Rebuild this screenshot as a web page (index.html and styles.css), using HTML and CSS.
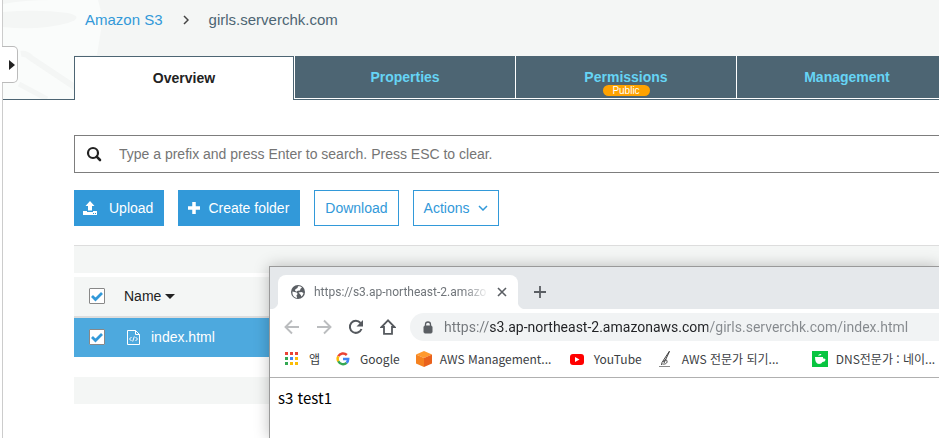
FILE: index.html
```
<!DOCTYPE html>
<html lang="ko">
<head>
<meta charset="UTF-8">
<title>Amazon S3</title>
<link rel="stylesheet" href="styles.css">
</head>
<body>

<div class="console">
	<header class="top">
		<!-- bucket -->
		<svg class="bucket" width="102" height="99" viewBox="0 0 102 99" aria-hidden="true">
			<path fill="#fafcfb" d="M0 4Q20 0 50 0H95Q101 20 98 30L94 55H71V99H0z"/>
			<path fill="#f4f6f5" d="M0 12Q35 9 65 13 82 17 65 23 35 31 0 27z"/>
			<path d="M16 84L44 99" fill="none" stroke="#f4f6f5" stroke-width="5"/>
			<path d="M18 54Q23 53 28 58L76 90" fill="none" stroke="#f4f6f5" stroke-width="6"/>
		</svg>
		<nav class="breadcrumb">
			<a href="#">Amazon S3</a>
			<svg width="6" height="10" viewBox="0 0 6 10" aria-hidden="true"><path d="M1 1l4 4-4 4" fill="none" stroke="#444" stroke-width="1.5"/></svg>
			<span>girls.serverchk.com</span>
		</nav>
		<nav class="tabs">
			<a class="tab active" href="#">Overview</a>
			<a class="tab" href="#">Properties</a>
			<a class="tab" href="#">Permissions<span class="public">Public</span></a>
			<a class="tab" href="#">Management</a>
		</nav>
	</header>
	<button class="handle" type="button" aria-label="Open menu">
		<svg width="6" height="10" viewBox="0 0 6 10"><path d="M0 0l6 5-6 5z" fill="#222"/></svg>
	</button>

	<main>
		<label class="search">
			<svg width="16" height="16" viewBox="0 0 16 16" aria-hidden="true"><circle cx="7" cy="7" r="5" fill="none" stroke="#222" stroke-width="2.200"/><path d="M10.700 10.700l3.300 3.300" stroke="#222" stroke-width="2.600" stroke-linecap="round"/></svg>
			<input type="text" aria-label="Search" placeholder="Type a prefix and press Enter to search. Press ESC to clear.">
		</label>

		<div class="buttons">
			<button class="btn primary" type="button">
				<svg class="icon-upload" width="16" height="16" viewBox="0 0 16 16" aria-hidden="true"><path fill="#fff" d="M8 1l4.500 5H10v4.500H6V6H3.500zM1 11h4v1h6v-1h4v4H1z"/><path d="M11 13.500h1M13 13.500h1" stroke="#3299d9"/></svg>
				Upload
			</button>
			<button class="btn primary" type="button">
				<svg width="12" height="12" viewBox="0 0 12 12" aria-hidden="true"><path d="M6 0v12M0 6h12" stroke="#fff" stroke-width="3.500"/></svg>
				Create folder
			</button>
			<button class="btn" type="button">Download</button>
			<button class="btn" type="button">
				Actions
				<svg width="10" height="6" viewBox="0 0 10 6" aria-hidden="true"><path d="M1 1l4 4 4-4" fill="none" stroke="#3299d9" stroke-width="1.500"/></svg>
			</button>
		</div>

		<div class="strip strip-top"></div>
		<table>
			<thead>
				<tr>
					<th class="check"><input type="checkbox" aria-label="Select all" checked></th>
					<th>Name <svg width="10" height="7" viewBox="0 0 10 7" aria-hidden="true"><path d="M0 0h10L5 5z" fill="#222"/></svg></th>
				</tr>
			</thead>
			<tbody>
				<tr>
					<td class="check"><input type="checkbox" aria-label="Select index.html" checked></td>
					<td><a href="#"><svg width="15" height="17" viewBox="0 0 15 17" aria-hidden="true"><path d="M1.500 1.500h8l4 4v10h-12zM9.500 1.500v4h4M5.500 8L3.500 10l2 2M9.500 8l2 2-2 2M8.300 7.500l-1.600 5" fill="none" stroke="#fff"/></svg>index.html</a></td>
				</tr>
			</tbody>
		</table>
		<div class="strip"></div>
	</main>
</div>

<!-- browser window -->
<section class="browser">
	<div class="tabstrip">
		<div class="page-tab">
			<svg width="16" height="16" viewBox="0 0 16 16" aria-hidden="true"><circle cx="8" cy="8" r="7" fill="#5a5e63"/><path fill="#fff" d="M2.500 7.500l4.200 1 1 1.500-1.200 1.200.6 2.800C4 13.500 2 11 2.500 7.500zM8 2.300c1.500-.2 3 .3 4 1.300l-1.500 1.200-.5 1.700-2.300.2-1.200 1-1.500-1 .4-1.500L7.500 4zM8.500 8.500l3-.5 2 1c-.3 1.500-1 2.800-2.200 3.600L10.800 11z"/></svg>
			<span class="page-title">https://s3.ap-northeast-2.amazo</span>
			<button class="icon-btn" type="button" aria-label="Close tab"><svg width="10" height="10" viewBox="0 0 10 10"><path d="M1 1l8 8M9 1L1 9" stroke="#5a5e63" stroke-width="1.600"/></svg></button>
		</div>
		<button class="icon-btn" type="button" aria-label="New tab"><svg width="12" height="12" viewBox="0 0 12 12"><path d="M6 0v12M0 6h12" stroke="#5a5e63" stroke-width="1.800"/></svg></button>
	</div>

	<div class="toolbar">
		<button class="icon-btn" type="button" aria-label="Back"><svg width="16" height="16" viewBox="0 0 16 16"><path d="M15 8H2M8 1.500L1.500 8 8 14.500" fill="none" stroke="#bbbdbf" stroke-width="1.900"/></svg></button>
		<button class="icon-btn" type="button" aria-label="Forward"><svg width="16" height="16" viewBox="0 0 16 16"><path d="M1 8h13M8 1.500L14.500 8 8 14.500" fill="none" stroke="#bbbdbf" stroke-width="1.900"/></svg></button>
		<button class="icon-btn" type="button" aria-label="Reload"><svg width="16" height="16" viewBox="0 0 16 16"><path d="M13.500 10A6 6 0 1 1 12.500 4" fill="none" stroke="#55595e" stroke-width="2"/><path d="M15 1v6.500H8.500z" fill="#55595e"/></svg></button>
		<button class="icon-btn" type="button" aria-label="Home"><svg width="16" height="16" viewBox="0 0 16 16"><path d="M8 1.300L1.500 8H4v6.800h8V8h2.500z" fill="none" stroke="#55595e" stroke-width="1.800"/></svg></button>
		<label class="address">
			<svg width="10" height="13" viewBox="0 0 10 13" aria-hidden="true"><rect x="1" y="5" width="8" height="7" rx="1" fill="#5a5e63" stroke="#5a5e63"/><path d="M2.500 5V3.500a2.500 2.500 0 0 1 5 0V5" fill="none" stroke="#5a5e63" stroke-width="1.300"/></svg>
			<input type="text" aria-label="Address" value="https://s3.ap-northeast-2.amazonaws.com/girls.serverchk.com/index.html">
		</label>
	</div>

	<nav class="bookmarks">
		<a href="#"><svg width="16" height="16" viewBox="0 0 16 16" aria-hidden="true"><path fill="#ea4335" d="M0 1h3v3H0zM5 1h3v3H5zM10 1h3v3h-3z"/><path fill="#34a853" d="M0 6h3v3H0zM0 11h3v3H0z"/><path fill="#4285f4" d="M5 6h3v3H5z"/><path fill="#fbbc05" d="M10 6h3v3h-3zM5 11h3v3H5zM10 11h3v3h-3z"/></svg>앱</a>
		<a href="#"><svg width="16" height="16" viewBox="0 0 16 16" aria-hidden="true"><g fill="none" stroke-width="2.500"><path stroke="#ea4335" d="M2.300 5.300A5.300 5.300 0 0 1 10.800 4"/><path stroke="#fbbc05" d="M2.300 5.300a5.300 5.300 0 0 0 0 5"/><path stroke="#34a853" d="M2.300 10.300a5.300 5.300 0 0 0 8.300 1.500"/><path stroke="#4285f4" d="M7 8h5.200a5.300 5.300 0 0 1-1.600 3.800"/></g></svg>Google</a>
		<a class="long" href="#"><svg width="16" height="16" viewBox="0 0 16 16" aria-hidden="true"><path fill="#ff9a2e" d="M8 0l8 3.500L8 7 0 3.500z"/><path fill="#f58220" d="M0 3.500L8 7v9l-8-3.500z"/><path fill="#e9611c" d="M16 3.500L8 7v9l8-3.500z"/></svg>AWS Management...</a>
		<a href="#"><svg width="16" height="16" viewBox="0 0 16 16" aria-hidden="true"><rect x="0" y="3" width="14" height="11" rx="3" fill="#f00"/><path d="M5 6l4.500 2.500L5 11z" fill="#fff"/></svg>YouTube</a>
		<a class="long" href="#"><svg width="16" height="16" viewBox="0 0 16 16" aria-hidden="true"><path d="M11.500 0L4 11.500 3.500 14M11.500.5L6 12M4.500 13c3 .5 5-1 4.500-3S6.500 8.500 5.500 11" fill="none" stroke="#444"/><path d="M1 15.500h11" stroke="#888"/></svg>AWS 전문가 되기...</a>
		<a class="long" href="#"><svg width="16" height="16" viewBox="0 0 16 16" aria-hidden="true"><path fill="#08c540" d="M0 0h16v16H0z"/><path fill="#fff" d="M3 6h8v1.500q3-.5 2.500 1.500-.5 1.800-3 2Q9.500 13 7 13 3 13 3 6zM6 4.500Q7 2.500 9.500 3 9 5 6 4.500z"/></svg>DNS전문가 : 네이...</a>
	</nav>

	<div class="page">s3 test1</div>
</section>

</body>
</html>
```

FILE: styles.css
```
* {
  box-sizing: border-box;
}
body {
  margin: 0;
  height: 100vh;
  position: relative;
  overflow: hidden;
  background-color: #fff;
  color: #222;
  font: 14px/20px "Liberation Sans", Arial, sans-serif;
}
a {
  text-decoration: none;
}
button {
  font: inherit;
  cursor: pointer;
}
svg {
  flex: none;
}

/* console */
.console {
  position: relative;
  height: 100%;
  margin-left: 2px;
  border-left: 1px solid #ccc;
}
.top {
  position: relative;
  height: 100px;
  padding: 10px 0 0 71px;
  background-color: #f4f6f5;
  border-bottom: 1px solid #4d6573;
}
.bucket {
  position: absolute;
  left: 0;
  top: 0;
}
.breadcrumb {
  position: relative;
  display: flex;
  align-items: center;
  gap: 20px;
  padding-left: 11px;
  color: #4d6573;
  font-size: 15px;
}
.breadcrumb a {
  color: #3299d9;
}
.tabs {
  position: relative;
  display: flex;
  margin-top: 26px;
}
.tab {
  flex: 1 0 221px;
  height: 43px;
  padding-top: 11px;
  background-color: #4d6573;
  border-right: 1px solid #fff;
  border-bottom: 1px solid #fff;
  color: #66d4f5;
  font-weight: bold;
  text-align: center;
}
.active {
  flex-basis: 220px;
  height: 44px;
  margin-right: 1px;
  background-color: #fff;
  border: 1px solid #4d6573;
  border-bottom: 0;
  color: #222;
}
.active + .tab {
  box-shadow: -1px 0 #fff;
}
.public {
  display: block;
  width: 47px;
  margin: -2px auto 0;
  border-radius: 6px;
  background-color: #ffa200;
  color: #fff;
  font-size: 10px;
  font-weight: normal;
  line-height: 11px;
}
.handle {
  position: absolute;
  left: -1px;
  top: 46px;
  width: 16px;
  height: 37px;
  padding: 0 0 0 5px;
  display: flex;
  align-items: center;
  justify-content: center;
  background-color: #fff;
  border: 1px solid #bbb;
  border-left: 0;
  border-radius: 0 5px 5px 0;
}
main {
  padding: 35px 0 0 71px;
}
.search {
  display: flex;
  align-items: center;
  gap: 17px;
  height: 38px;
  padding-left: 11px;
  border: 1px solid #7d7d7d;
  border-right: 0;
}
.search input {
  flex: 1;
  padding: 0;
  border: 0;
  outline: 0;
  font: inherit;
}
.search input::placeholder {
  color: #757575;
}
.buttons {
  display: flex;
  gap: 14px;
  margin: 17px 0 19px;
}
.btn {
  display: flex;
  align-items: center;
  gap: 8px;
  height: 36px;
  padding: 0 10px;
  background-color: #fff;
  border: 1px solid #3299d9;
  color: #3299d9;
}
.primary {
  padding-left: 9px;
  background-color: #3299d9;
  color: #fff;
}
.icon-upload {
  margin: 0 3px 0 -2px;
}

/* file list */
.strip {
  height: 27px;
  margin-top: 20px;
  background-color: #f4f6f5;
}
.strip-top {
  height: 28px;
  margin: 0 0 4px;
  border-top: 1px solid #ddd;
}
table {
  width: 100%;
  border-collapse: collapse;
}
th, td {
  height: 39px;
  padding: 0;
  font-weight: normal;
  text-align: left;
}
th {
  height: 41px;
  padding-bottom: 3px;
}
td {
  padding-bottom: 1px;
}
thead tr {
  background-color: #f4f6f5;
  box-shadow: inset 0 -2px #ddd;
}
tbody tr {
  background-color: #4da9de;
}
.check {
  width: 50px;
  padding-left: 15px;
}
.check input {
  appearance: none;
  display: block;
  width: 16px;
  height: 16px;
  margin: 0;
  border: 1px solid #888;
  border-radius: 1px;
  background: #fff url("data:image/svg+xml,%3Csvg xmlns='http://www.w3.org/2000/svg' viewBox='0 0 14 14'%3E%3Cpath d='M2 7l3.500 3.500L12 4' fill='none' stroke='%233299d9' stroke-width='2.800'/%3E%3C/svg%3E");
}
th svg {
  vertical-align: middle;
}
td a {
  display: flex;
  align-items: center;
  gap: 10px;
  padding-left: 2px;
  color: #fff;
}

/* browser window */
.browser {
  position: absolute;
  left: 269px;
  top: 266px;
  right: 0;
  bottom: 0;
  background-color: #fff;
  border: 1px solid #999;
  border-width: 1px 0 0 1px;
  box-shadow: 0 0 14px rgba(0, 0, 0, .25);
  color: #3c4043;
  font-family: Roboto, "Noto Sans CJK KR", sans-serif;
}
.icon-btn {
  display: flex;
  padding: 0;
  background: none;
  border: 0;
}
.tabstrip {
  display: flex;
  align-items: center;
  gap: 16px;
  height: 42px;
  padding-top: 8px;
  background: radial-gradient(circle at 0 0, #e5e8eb 8px, #fff 9px) 0 100% / 8px 8px no-repeat #e5e8eb;
}
.page-tab {
  position: relative;
  display: flex;
  align-items: center;
  width: 240px;
  height: 34px;
  margin-left: 8px;
  padding: 0 11px 0 12px;
  background-color: #fff;
  border-radius: 8px 8px 0 0;
}
.page-tab::after {
  content: "";
  position: absolute;
  left: 100%;
  bottom: 0;
  width: 8px;
  height: 8px;
  background: radial-gradient(circle at 100% 0, #e5e8eb 8px, #fff 9px);
}
.page-title {
  flex: 1;
  margin: 0 8px;
  white-space: nowrap;
  color: #70757a;
  font-size: 12px;
  -webkit-mask-image: linear-gradient(to right, #000 85%, transparent);
  mask-image: linear-gradient(to right, #000 85%, transparent);
}
.toolbar {
  display: flex;
  align-items: center;
  gap: 16px;
  padding: 4px 0 4px 14px;
}
.address {
  flex: 1;
  display: flex;
  align-items: center;
  gap: 11px;
  height: 28px;
  margin-left: -2px;
  padding-left: 13px;
  background-color: #f1f3f4;
  border-radius: 14px 0 0 14px;
}
/* the host is darker than the rest of the address */
.address input {
  flex: 1;
  min-width: 0;
  padding: 0;
  border: 0;
  outline: 0;
  background: linear-gradient(to right, #73777b 46px, #202124 46px, #202124 264px, #85898d 264px);
  -webkit-background-clip: text;
  background-clip: text;
  color: transparent;
  font: inherit;
}
.bookmarks {
  display: flex;
  gap: 16px;
  height: 33px;
  padding: 0 0 5px 15px;
  border-bottom: 1px solid #b0b0b0;
  font-family: "Noto Sans CJK KR", sans-serif;
}
.bookmarks a {
  flex: none;
  display: flex;
  align-items: center;
  gap: 8px;
  color: #3c4043;
  font-size: 12px;
  white-space: nowrap;
}
.bookmarks .long {
  width: 138px;
}
.page {
  padding: 10px 8px;
  color: #000;
  font-family: "Noto Sans CJK KR", sans-serif;
  font-size: 15px;
}
```
